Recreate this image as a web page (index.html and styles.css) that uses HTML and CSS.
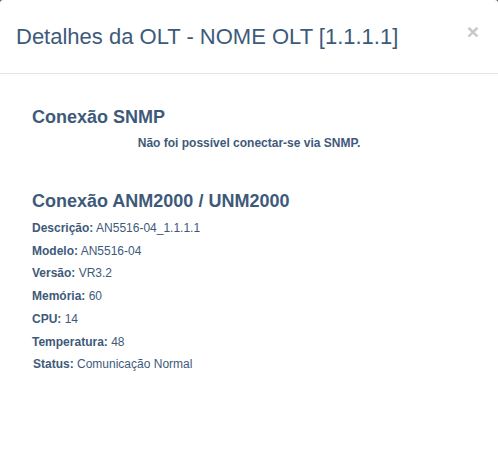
FILE: index.html
```html
<!DOCTYPE html>
<html lang="pt-BR">
<head>
    <meta charset="utf-8" />
    <meta name="viewport" content="width=device-width, initial-scale=1.0">
    <link rel="stylesheet" href="styles.css">
    <title>Detalhes da OLT</title>
</head>
<body>
    <div class="modal">
        <div class="modal-header">
            <h4 class="modal-title">Detalhes da OLT - NOME OLT [1.1.1.1]</h4>
            <span class="close">&times;</span>
        </div>
        <div class="modal-body">
            <h3>Conexão SNMP</h3>
            <p class="aviso">Não foi possível conectar-se via SNMP.</p>

            <h3 class="secao">Conexão ANM2000 / UNM2000</h3>
            <ul class="dados">
                <li><b>Descrição:</b> AN5516-04_1.1.1.1</li>
                <li><b>Modelo:</b> AN5516-04</li>
                <li><b>Versão:</b> VR3.2</li>
                <li><b>Memória:</b> 60</li>
                <li><b>CPU:</b> 14</li>
                <li><b>Temperatura:</b> 48</li>
                <li class="status"><b>Status:</b> Comunicação Normal</li>
            </ul>
        </div>
    </div>
</body>
</html>
```

FILE: styles.css
```css
body {
    margin: 0;
    height: 100vh;
    background-color: #555;
    font-family: 'Liberation Sans', Arial, sans-serif;
    color: #3e5a7a;
    overflow: hidden;
}

.modal {
    background-color: white;
    height: 100%;
    border-radius: 3px 3px 0 0;
}

.modal-header {
    display: flex;
    justify-content: space-between;
    align-items: flex-start;
    height: 73px;
    padding: 0 16px;
    border-bottom: 1px solid #e5e5e5;
    box-sizing: content-box;
}

.modal-title {
    margin: 24px 0 0;
    font-size: 22px;
    font-weight: normal;
    line-height: 26px;
    color: #3e5a7a;
}

.close {
    margin: 19px 3px 0 0;
    font-size: 21px;
    font-weight: bold;
    line-height: 26px;
    color: #c8c8c8;
}

.modal-body {
    padding: 31px 32px;
}

.modal-body h3 {
    margin: 0;
    font-size: 18px;
    font-weight: bold;
    line-height: 24px;
}

.aviso {
    margin: 5px 0 0;
    text-align: center;
    font-size: 12px;
    font-weight: bold;
    line-height: 18px;
}

.modal-body .secao {
    margin-top: 37px;
}

.dados {
    list-style: none;
    margin: 4px 0 0;
    padding: 0;
    font-size: 12px;
}

.dados li {
    line-height: 22.7px;
}

.dados .status {
    padding-left: 1px;
}
```
